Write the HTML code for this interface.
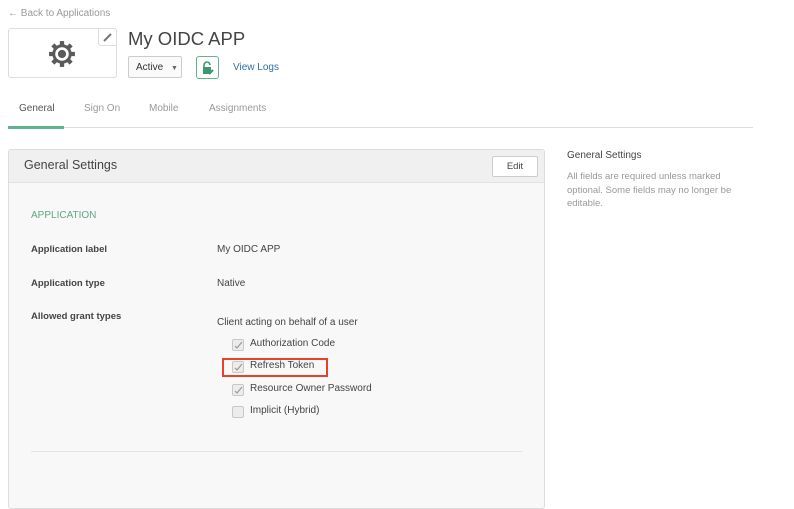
<!DOCTYPE html>
<html><head><meta charset="utf-8"><style>
*{box-sizing:border-box;margin:0;padding:0}
body{width:794px;height:480px;overflow:hidden;background:#fff;font-family:"Liberation Sans",sans-serif;color:#333;position:relative}
.a{position:absolute;white-space:nowrap}
.cb{position:absolute;width:12px;height:12px;border:1px solid #c8c8c8;background:#ececec;border-radius:2px}
.cb svg{position:absolute;left:1px;top:1px}
</style></head><body>
<div class="a" style="left:8px;top:8px;font-size:10px;color:#999">← Back to Applications</div>
<div class="a" style="left:8px;top:28px;width:109px;height:50px;border:1px solid #ddd;border-radius:3px;background:#fff"></div>
<div class="a" style="left:98px;top:28px;width:19px;height:18px;border:1px solid #ddd;border-radius:0 3px 0 3px;background:#fff"></div>
<svg class="a" style="left:102px;top:31px" width="12" height="12" viewBox="0 0 12 12"><path d="M2 10 L9 3" stroke="#777" stroke-width="2"/></svg>
<svg class="a" style="left:48px;top:40px" width="28" height="28" viewBox="0 0 26 26"><g fill="#5a5a5a"><circle cx="13" cy="13" r="9"/><g stroke="#5a5a5a" stroke-width="4"><line x1="13" y1="1" x2="13" y2="25"/><line x1="1" y1="13" x2="25" y2="13"/><line x1="4.5" y1="4.5" x2="21.5" y2="21.5"/><line x1="21.5" y1="4.5" x2="4.5" y2="21.5"/></g></g><circle cx="13" cy="13" r="6.3" fill="#fff"/><circle cx="13" cy="13" r="3.8" fill="#5a5a5a"/></svg>
<div class="a" style="left:128px;top:28px;font-size:18.5px;color:#444">My OIDC APP</div>
<div class="a" style="left:128px;top:56px;width:54px;height:22px;border:1px solid #ccc;border-radius:2px;background:#fafafa;font-size:10px;padding:5px 0 0 7px">Active <span style="font-size:7px;color:#666;margin-left:5px">▼</span></div>
<div class="a" style="left:196px;top:56px;width:23px;height:23px;border:1px solid #5fb48f;border-radius:3px;background:#fff"></div>
<svg class="a" style="left:201px;top:61px" width="14" height="14" viewBox="0 0 14 14"><path d="M3 6V4a3 3 0 0 1 6 0" stroke="#3a9a6f" stroke-width="1.6" fill="none"/><rect x="2" y="6" width="8" height="7" fill="#3a9a6f"/><path d="M8 13l4-4" stroke="#3a9a6f" stroke-width="2"/></svg>
<div class="a" style="left:233px;top:62px;font-size:10px;color:#2f6fa6">View Logs</div>
<div class="a" style="left:19px;top:103px;font-size:10px;color:#555">General</div>
<div class="a" style="left:84px;top:103px;font-size:10px;color:#999">Sign On</div>
<div class="a" style="left:149px;top:103px;font-size:10px;color:#999">Mobile</div>
<div class="a" style="left:209px;top:103px;font-size:10px;color:#999">Assignments</div>
<div class="a" style="left:8px;top:127px;width:745px;height:1px;background:#ddd"></div>
<div class="a" style="left:8px;top:126px;width:56px;height:3px;background:#5fb48f"></div>

<div class="a" style="left:8px;top:149px;width:537px;height:360px;border:1px solid #ddd;border-radius:3px;background:#f8f8f8"></div>
<div class="a" style="left:9px;top:150px;width:535px;height:33px;background:#f0f0f0;border-bottom:1px solid #e2e2e2"></div>
<div class="a" style="left:24px;top:158px;font-size:12.5px;color:#444">General Settings</div>
<div class="a" style="left:492px;top:156px;width:46px;height:21px;border:1px solid #ccc;border-radius:2px;background:#fff;font-size:9.5px;text-align:center;padding-top:4px;color:#444">Edit</div>
<div class="a" style="left:31px;top:210px;font-size:10px;color:#5fa882">APPLICATION</div>
<div class="a" style="left:31px;top:244px;font-size:9.5px;font-weight:bold;color:#444">Application label</div>
<div class="a" style="left:217px;top:244px;font-size:10px;color:#444">My OIDC APP</div>
<div class="a" style="left:31px;top:278px;font-size:9.5px;font-weight:bold;color:#444">Application type</div>
<div class="a" style="left:217px;top:278px;font-size:10px;color:#444">Native</div>
<div class="a" style="left:31px;top:311px;font-size:9.5px;font-weight:bold;color:#444">Allowed grant types</div>
<div class="a" style="left:217px;top:317px;font-size:10px;color:#444">Client acting on behalf of a user</div>
<div class="cb" style="left:232px;top:339px"><svg width="9" height="9" viewBox="0 0 9 9"><path d="M1 5l2 2 5-6" stroke="#999" fill="none" stroke-width="1.2"/></svg></div>
<div class="a" style="left:250px;top:338px;font-size:10px;color:#444">Authorization Code</div>
<div class="cb" style="left:232px;top:361px"><svg width="9" height="9" viewBox="0 0 9 9"><path d="M1 5l2 2 5-6" stroke="#999" fill="none" stroke-width="1.2"/></svg></div>
<div class="a" style="left:250px;top:360px;font-size:10px;color:#444">Refresh Token</div>
<div class="a" style="left:222px;top:358px;width:106px;height:19px;border:2px solid #e8402a"></div>
<div class="cb" style="left:232px;top:384px"><svg width="9" height="9" viewBox="0 0 9 9"><path d="M1 5l2 2 5-6" stroke="#999" fill="none" stroke-width="1.2"/></svg></div>
<div class="a" style="left:250px;top:383px;font-size:10px;color:#444">Resource Owner Password</div>
<div class="cb" style="left:232px;top:406px"></div>
<div class="a" style="left:250px;top:405px;font-size:10px;color:#444">Implicit (Hybrid)</div>
<div class="a" style="left:31px;top:451px;width:491px;height:1px;background:#e4e4e4"></div>

<div class="a" style="left:567px;top:150px;font-size:10px;color:#444">General Settings</div>
<div class="a" style="left:567px;top:170px;font-size:9.5px;color:#999;line-height:13.5px;white-space:normal;width:185px">All fields are required unless marked optional. Some fields may no longer be editable.</div>
</body></html>
